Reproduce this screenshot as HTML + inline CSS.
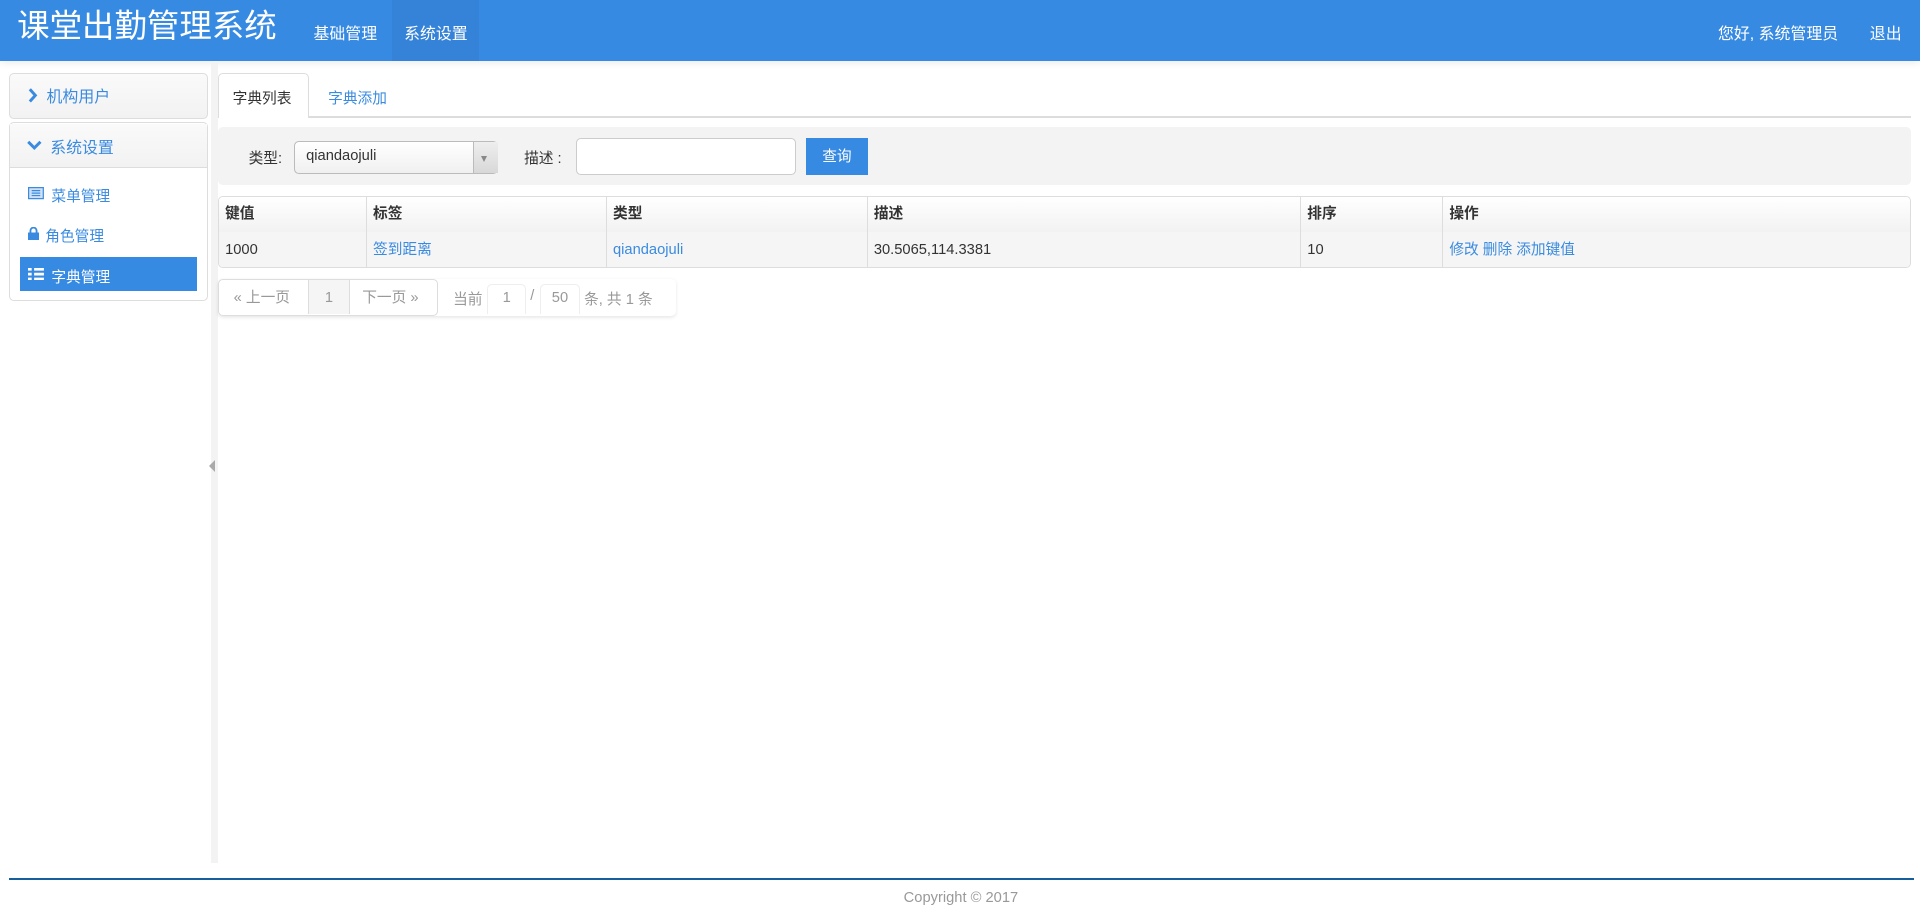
<!DOCTYPE html>
<html><head><meta charset="utf-8"><style>
html,body{margin:0;padding:0;width:1920px;height:920px;overflow:hidden;background:#fff}
#w{zoom:1.2245;width:1568px;height:752px;position:relative;font-family:"Liberation Sans","Noto Sans CJK SC",sans-serif;font-size:12px;color:#333}
.a{position:absolute;white-space:nowrap}
.blue{color:#3a8be0}
#hd{position:absolute;left:0;top:0;width:1568px;height:50px;background:#378ae2;color:#fff;box-shadow:0 2px 6px rgba(0,0,0,.08)}
.box{position:absolute;border:1px solid #ddd;border-radius:4px;box-sizing:border-box}
.cell{position:absolute;top:0;height:29px;line-height:29px;border-left:1px solid #ddd;box-sizing:border-box;padding-left:5px}
</style></head><body><div id="w">
<div id="hd">
 <div class="a" style="left:14px;top:5px;font-size:26.5px;line-height:34px">课堂出勤管理系统</div>
 <div class="a" style="left:256px;top:17px;font-size:13px">基础管理</div>
 <div class="a" style="left:320px;top:0;width:71px;height:50px;background:#3583d8"></div>
 <div class="a" style="left:330px;top:17px;font-size:13px">系统设置</div>
 <div class="a" style="left:1403px;top:17px;font-size:13px">您好, 系统管理员</div>
 <div class="a" style="left:1527px;top:17px;font-size:13px">退出</div>
</div>
<!-- sidebar -->
<div class="box" style="left:7px;top:60px;width:163px;height:37px;background:linear-gradient(#fafafa,#f2f2f2)"></div>
<svg class="a" style="left:23px;top:72px" width="8" height="12"><path d="M1.5 1 L6 6 L1.5 11" stroke="#3a8be0" stroke-width="2.4" fill="none"/></svg>
<div class="a blue" style="left:38px;top:69px;font-size:13px">机构用户</div>
<div class="box" style="left:7px;top:100px;width:163px;height:146px"></div>
<div class="a" style="left:8px;top:101px;width:161px;height:35px;background:linear-gradient(#fafafa,#f2f2f2);border-bottom:1px solid #ddd"></div>
<svg class="a" style="left:22px;top:114px" width="12" height="9"><path d="M1 1.5 L6 6.5 L11 1.5" stroke="#3a8be0" stroke-width="2.4" fill="none"/></svg>
<div class="a blue" style="left:41px;top:110px;font-size:13px">系统设置</div>
<svg class="a" style="left:23px;top:153px" width="13" height="10"><rect x="0.5" y="0.5" width="12" height="9" fill="#cfe0f5" stroke="#3a8be0"/><path d="M3 3h7M3 5h7M3 7h7" stroke="#3a8be0"/></svg>
<div class="a blue" style="left:42px;top:151px;font-size:12px">菜单管理</div>
<svg class="a" style="left:23px;top:185px" width="9" height="11"><rect x="0" y="4.5" width="9" height="6.5" fill="#3a8be0"/><path d="M2 5V3a2.5 2.5 0 0 1 5 0v2" stroke="#3a8be0" stroke-width="1.5" fill="none"/></svg>
<div class="a blue" style="left:37px;top:184px;font-size:12px">角色管理</div>
<div class="a" style="left:16px;top:210px;width:145px;height:28px;background:#378ae2"></div>
<svg class="a" style="left:23px;top:219px" width="13" height="10"><path d="M0 1h3M5 1h8M0 5h3M5 5h8M0 9h3M5 9h8" stroke="#fff" stroke-width="2.2"/></svg>
<div class="a" style="left:42px;top:217px;font-size:12px;color:#fff">字典管理</div>
<div class="a" style="left:172px;top:50px;width:6px;height:655px;background:#f3f3f3"></div>
<div class="a" style="left:171px;top:376px;width:0;height:0;border-top:5px solid transparent;border-bottom:5px solid transparent;border-right:5px solid #aaa"></div>
<!-- tabs -->
<div class="a" style="left:178px;top:95px;width:1383px;height:1px;background:#ddd"></div>
<div class="a" style="left:178px;top:60px;width:74px;height:36px;border:1px solid #ddd;border-bottom:none;border-radius:4px 4px 0 0;background:#fff;box-sizing:border-box"></div>
<div class="a" style="left:190px;top:71px">字典列表</div>
<div class="a blue" style="left:268px;top:71px">字典添加</div>
<!-- search -->
<div class="a" style="left:178px;top:104px;width:1383px;height:47px;background:#f3f3f3;border-radius:4px"></div>
<div class="a" style="left:203px;top:120px">类型:</div>
<div class="box" style="left:240px;top:115px;width:167px;height:27px;background:linear-gradient(#fff,#f0f0f0);border-color:#bbb"></div>
<div class="a" style="left:386px;top:116px;width:20px;height:25px;border-left:1px solid #bbb;background:linear-gradient(#eee,#d8d8d8)"></div>
<div class="a" style="left:393px;top:127px;border-left:3px solid transparent;border-right:3px solid transparent;border-top:5px solid #888"></div>
<div class="a" style="left:250px;top:121px">qiandaojuli</div>
<div class="a" style="left:428px;top:120px">描述 :</div>
<div class="box" style="left:470px;top:113px;width:180px;height:30px;background:#fff;border-color:#ccc"></div>
<div class="a" style="left:658px;top:113px;width:51px;height:30px;background:#378ae2;color:#fff;text-align:center;line-height:32px">查询</div>
<!-- table -->
<div class="box" style="left:178px;top:160px;width:1383px;height:59px;overflow:hidden">
 <div class="a" style="left:0;top:0;width:1383px;height:29px;background:linear-gradient(#fff,#f2f2f2);border-bottom:1px solid #ddd;font-weight:bold">
  <div class="cell" style="left:0;border:none">键值</div>
  <div class="cell" style="left:120px">标签</div>
  <div class="cell" style="left:316px">类型</div>
  <div class="cell" style="left:529px">描述</div>
  <div class="cell" style="left:883px">排序</div>
  <div class="cell" style="left:999px">操作</div>
 </div>
 <div class="a" style="left:0;top:29px;width:1383px;height:29px;background:#f5f5f5">
  <div class="cell" style="left:0;border:none;line-height:31px">1000</div>
  <div class="cell blue" style="left:120px;line-height:31px">签到距离</div>
  <div class="cell blue" style="left:316px;line-height:31px">qiandaojuli</div>
  <div class="cell" style="left:529px;line-height:31px">30.5065,114.3381</div>
  <div class="cell" style="left:883px;line-height:31px">10</div>
  <div class="cell blue" style="left:999px;line-height:31px">修改 删除 添加键值</div>
 </div>
</div>
<!-- pagination -->
<div class="a" style="left:178px;top:228px;width:374px;height:30px;box-shadow:0 1px 3px rgba(0,0,0,.1);border-radius:4px"></div>
<div class="box" style="left:178px;top:228px;width:180px;height:30px;background:#fff;color:#999;line-height:30px">
 <span class="a" style="left:12px;top:0">« 上一页</span>
 <span class="a" style="left:73px;top:0;width:32px;height:28px;background:#f5f5f5;border-left:1px solid #ddd;border-right:1px solid #ddd;text-align:center">1</span>
 <span class="a" style="left:117px;top:0">下一页 »</span>
</div>
<div class="a" style="left:370px;top:235px;color:#999">当前</div>
<div class="a" style="left:398px;top:232px;width:30px;height:24px;border:1px solid #eee;border-bottom:none;border-radius:4px 4px 0 0;text-align:center;color:#999;line-height:22px">1</div>
<div class="a" style="left:433px;top:235px;color:#999">/</div>
<div class="a" style="left:441px;top:232px;width:31px;height:24px;border:1px solid #eee;border-bottom:none;border-radius:4px 4px 0 0;text-align:center;color:#999;line-height:22px">50</div>
<div class="a" style="left:477px;top:235px;color:#999">条, 共 1 条</div>
<!-- footer -->
<div class="a" style="left:7px;top:717px;width:1556px;height:2px;background:#155f9c"></div>
<div class="a" style="left:738px;top:727px;color:#999">Copyright © 2017</div>
</div></body></html>
